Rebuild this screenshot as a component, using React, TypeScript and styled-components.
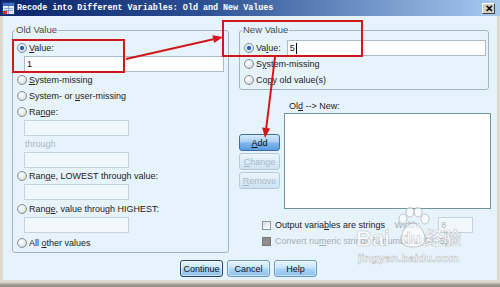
import React from "react";
import styled, { createGlobalStyle } from "styled-components";

const BG = "#e7f3fb";

const Global = createGlobalStyle`
  html, body { margin: 0; padding: 0; background: #fff; }
  body { font-family: "Liberation Sans", Arial, sans-serif; }
  * { box-sizing: border-box; }
`;

const Window = styled.div`
  position: relative;
  width: 500px;
  height: 287px;
  overflow: hidden;
  display: flex;
  flex-direction: column;
  background: #d8d4cc;
  font-family: "Liberation Sans", Arial, sans-serif;
  font-size: 9px;
  color: #222;
`;

const TitleBar = styled.div`
  height: 16px;
  flex: none;
  display: flex;
  align-items: center;
  padding: 0 5px 0 2px;
  background: linear-gradient(to right, #0a246a 0%, #2c4f92 40%, #a6caf0 100%);
`;

const TitleText = styled.span`
  flex: 1;
  margin-left: 2px;
  color: #fff;
  font-family: "Liberation Mono", "Courier New", monospace;
  font-weight: bold;
  font-size: 8.4px;
  white-space: nowrap;
`;

const CloseBtn = styled.div`
  width: 13px;
  height: 11px;
  margin-top: 1px;
  display: flex;
  align-items: center;
  justify-content: center;
  background: #d4d0c8;
  border: 1px solid;
  border-color: #ffffff #404040 #404040 #ffffff;
  color: #000;
  font: bold 10px "Liberation Sans", Arial, sans-serif;
  line-height: 1;
`;

const Main = styled.div`
  flex: 1;
  display: flex;
  flex-direction: column;
  background: ${BG};
  border-left: 3px solid #dcd8ce;
  border-right: 3px solid #dcd8ce;
  padding: 14px 7px 0 9px;
`;

const TopRow = styled.div`
  display: flex;
  align-items: flex-start;
  gap: 10px;
`;

const Group = styled.div<{ $w: number; $h: number }>`
  width: ${(p) => p.$w}px;
  height: ${(p) => p.$h}px;
  flex: none;
  border: 1px solid #a3b6c2;
  border-radius: 3px;
  padding: 0 3px 0 4px;
  display: flex;
  flex-direction: column;
`;

const Caption = styled.div`
  width: fit-content;
  height: 12px;
  line-height: 12px;
  margin: -7px 0 4px -2px;
  padding: 0 1px;
  background: ${BG};
  color: #4a4a4a;
  font-size: 9.5px;
`;

const Option = styled.div<{ $mt?: number; $muted?: boolean }>`
  height: 16px;
  flex: none;
  display: flex;
  align-items: center;
  gap: 2px;
  white-space: nowrap;
  margin-top: ${(p) => p.$mt ?? 0}px;
  color: ${(p) => (p.$muted ? "#a8b8c4" : "#222")};
`;

const Radio = styled.span<{ $on?: boolean }>`
  width: 10px;
  height: 10px;
  flex: none;
  border-radius: 50%;
  border: 1px solid #858f97;
  background: radial-gradient(circle at 40% 35%, #ffffff 0%, #e4e8eb 55%, #b9c0c6 100%);
  display: flex;
  align-items: center;
  justify-content: center;
  &::after {
    content: "";
    display: ${(p) => (p.$on ? "block" : "none")};
    width: 4px;
    height: 4px;
    border-radius: 50%;
    background: #1f5fb5;
    box-shadow: 0 0 1px #5d8fd8;
  }
`;

const Key = styled.span`
  text-decoration: underline;
`;

const Field = styled.div<{ $w: number; $ml?: number; $mr?: number; $disabled?: boolean }>`
  width: ${(p) => p.$w}px;
  height: 16px;
  flex: none;
  margin-left: ${(p) => p.$ml ?? 7}px;
  margin-right: ${(p) => p.$mr ?? 0}px;
  padding: 0 2px;
  display: flex;
  align-items: center;
  background: ${(p) => (p.$disabled ? "#f1f8fc" : "#ffffff")};
  border: 1px solid ${(p) => (p.$disabled ? "#c4d4de" : "#a9bcc8")};
  color: ${(p) => (p.$disabled ? "#a8b4bc" : "#111")};
  font-size: 9px;
`;

const Caret = styled.span`
  width: 1px;
  height: 11px;
  margin-left: 1px;
  background: #000;
`;

const SubLabel = styled.div`
  height: 16px;
  flex: none;
  display: flex;
  align-items: center;
  margin-left: 8px;
  color: #a8b8c4;
`;

const RightCol = styled.div`
  width: 252px;
  flex: none;
  display: flex;
  flex-direction: column;
`;

const ListArea = styled.div`
  display: flex;
  gap: 4px;
  margin-top: 10px;
`;

const SideButtons = styled.div`
  width: 41px;
  flex: none;
  padding-top: 34px;
  display: flex;
  flex-direction: column;
  gap: 2px;
`;

const SideButton = styled.div<{ $disabled?: boolean }>`
  height: 17px;
  display: flex;
  align-items: center;
  justify-content: center;
  border-radius: 3px;
  font-size: 9px;
  border: 1px solid ${(p) => (p.$disabled ? "#b3cade" : "#3d6fa3")};
  color: ${(p) => (p.$disabled ? "#a6b9c9" : "#0d0d0d")};
  background: ${(p) =>
    p.$disabled
      ? "linear-gradient(to bottom, #eef6fc 0%, #dcebf6 50%, #cfe2f1 100%)"
      : "linear-gradient(to bottom, #d6eafb 0%, #a9cff3 45%, #7fb5ea 55%, #5c9de0 100%)"};
`;

const ListCol = styled.div`
  flex: 1;
  display: flex;
  flex-direction: column;
`;

const ListLabel = styled.div`
  height: 12px;
  line-height: 12px;
  margin-left: 5px;
`;

const ListBox = styled.div`
  height: 96px;
  margin-top: 1px;
  background: #fff;
  border: 1px solid #6f959f;
`;

const Checks = styled.div`
  display: flex;
  flex-direction: column;
  margin-top: 8px;
  padding-left: 23px;
`;

const CheckRow = styled.div<{ $muted?: boolean }>`
  height: 16px;
  display: flex;
  align-items: center;
  gap: 4px;
  white-space: nowrap;
  color: ${(p) => (p.$muted ? "#a3aeb6" : "#222")};
`;

const CheckBox = styled.span<{ $filled?: boolean }>`
  width: 9px;
  height: 9px;
  flex: none;
  border: 1px solid ${(p) => (p.$filled ? "#7a7a7a" : "#8c979f")};
  background: ${(p) =>
    p.$filled ? "#8e8e8e" : "linear-gradient(135deg, #d9dee2, #ffffff)"};
`;

const WidthLabel = styled.span`
  margin-left: auto;
  color: #a3aeb6;
`;

const ButtonRow = styled.div`
  display: flex;
  justify-content: center;
  gap: 4px;
  margin-top: 7px;
  padding-right: 5px;
`;

const PushButton = styled.div<{ $default?: boolean }>`
  width: 43px;
  height: 17px;
  display: flex;
  align-items: center;
  justify-content: center;
  border-radius: 3px;
  font-size: 9px;
  color: #111;
  border: 1px solid ${(p) => (p.$default ? "#27466a" : "#6b99c4")};
  background: linear-gradient(to bottom, #e9f6fe 0%, #c7e4fa 45%, #a9d2f3 55%, #8fc3ec 100%);
  box-shadow: inset 0 0 0 1px rgba(255, 255, 255, 0.45);
`;

const BottomFrame = styled.div`
  height: 7px;
  flex: none;
  background: linear-gradient(to bottom, #e2dfd8 0, #d4d0c8 3px, #a8a49c 4px, #8e8a84 100%);
`;

const Annotations = styled.svg`
  position: absolute;
  left: 0;
  top: 0;
  pointer-events: none;
`;

const Watermark = styled.div`
  position: absolute;
  left: 355px;
  top: 207px;
  width: 120px;
  height: 62px;
  pointer-events: none;
`;

const WmText = styled.span<{ $x: number; $y: number; $size: number; $cjk?: boolean }>`
  position: absolute;
  left: ${(p) => p.$x}px;
  top: ${(p) => p.$y}px;
  font-family: ${(p) =>
    p.$cjk ? '"Noto Sans CJK SC", sans-serif' : '"Liberation Sans", Arial, sans-serif'};
  font-weight: bold;
  font-size: ${(p) => p.$size}px;
  line-height: 1;
  white-space: nowrap;
  color: rgba(255, 255, 255, 0.72);
  -webkit-text-stroke: 0.6px rgba(150, 150, 150, 0.55);
`;

const TitleIcon = () => (
  <svg width="13" height="13" viewBox="0 0 13 13">
    <rect x="0.5" y="0.5" width="12" height="12" fill="#dfe9f6" stroke="#1b3d7e" />
    <rect x="1" y="1" width="11" height="3" fill="#3f6fc2" />
    <path d="M2 6.5h9M2 8.5h9M6.5 4v8" stroke="#7d98c4" strokeWidth="0.8" />
    <rect x="1" y="9" width="4" height="3" fill="#d2302a" />
  </svg>
);

const Paw = () => (
  <svg
    width="36"
    height="44"
    viewBox="0 0 36 44"
    style={{ position: "absolute", left: 40, top: 0 }}
  >
    <g fill="rgba(255,255,255,0.6)" stroke="rgba(160,160,160,0.6)" strokeWidth="1">
      <ellipse cx="8" cy="12" rx="4" ry="5" />
      <ellipse cx="15" cy="5" rx="4" ry="5" />
      <ellipse cx="23" cy="5" rx="4" ry="5" />
      <ellipse cx="30" cy="12" rx="4" ry="5" />
      <path d="M18 16c-6 0-12 9-12 16 0 6 5 8 12 8s12-2 12-8c0-7-6-16-12-16z" />
    </g>
  </svg>
);

const App: React.FC = () => (
  <>
    <Global />
    <Window>
      <TitleBar>
        <TitleIcon />
        <TitleText>Recode into Different Variables: Old and New Values</TitleText>
        <CloseBtn>✕</CloseBtn>
      </TitleBar>
      <Main>
        <TopRow>
          <Group $w={217} $h={223}>
            <Caption>Old Value</Caption>
            <Option>
              <Radio $on />
              <span>
                <Key>V</Key>alue:
              </span>
            </Option>
            <Field $w={200}>1</Field>
            <Option>
              <Radio />
              <span>
                <Key>S</Key>ystem-missing
              </span>
            </Option>
            <Option>
              <Radio />
              <span>
                System- or <Key>u</Key>ser-missing
              </span>
            </Option>
            <Option>
              <Radio />
              <span>
                Ra<Key>n</Key>ge:
              </span>
            </Option>
            <Field $w={105} $disabled />
            <SubLabel>through</SubLabel>
            <Field $w={105} $disabled />
            <Option>
              <Radio />
              <span>
                Ran<Key>g</Key>e, LOWEST through value:
              </span>
            </Option>
            <Field $w={105} $disabled />
            <Option $mt={1}>
              <Radio />
              <span>
                Rang<Key>e</Key>, value through HIGHEST:
              </span>
            </Option>
            <Field $w={105} $disabled />
            <Option $mt={2}>
              <Radio />
              <span>
                All <Key>o</Key>ther values
              </span>
            </Option>
          </Group>
          <RightCol>
            <Group $w={250} $h={60}>
              <Caption>New Value</Caption>
              <Option>
                <Radio $on />
                <span>
                  Va<Key>l</Key>ue:
                </span>
                <Field $w={199} $ml={4}>
                  5<Caret />
                </Field>
              </Option>
              <Option>
                <Radio />
                <span>
                  S<Key>y</Key>stem-missing
                </span>
              </Option>
              <Option>
                <Radio />
                <span>
                  Co<Key>p</Key>y old value(s)
                </span>
              </Option>
            </Group>
            <ListArea>
              <SideButtons>
                <SideButton>
                  <span>
                    <Key>A</Key>dd
                  </span>
                </SideButton>
                <SideButton $disabled>
                  <span>
                    <Key>C</Key>hange
                  </span>
                </SideButton>
                <SideButton $disabled>
                  <span>
                    <Key>R</Key>emove
                  </span>
                </SideButton>
              </SideButtons>
              <ListCol>
                <ListLabel>
                  Ol<Key>d</Key> --&gt; New:
                </ListLabel>
                <ListBox />
              </ListCol>
            </ListArea>
            <Checks>
              <CheckRow>
                <CheckBox />
                <span>
                  Output varia<Key>b</Key>les are strings
                </span>
                <WidthLabel>Width:</WidthLabel>
                <Field $w={35} $ml={14} $mr={18} $disabled>
                  8
                </Field>
              </CheckRow>
              <CheckRow $muted>
                <CheckBox $filled />
                <span>
                  Convert nu<Key>m</Key>eric strings to numbers ('5'-&gt;5)
                </span>
              </CheckRow>
            </Checks>
          </RightCol>
        </TopRow>
        <ButtonRow>
          <PushButton $default>Continue</PushButton>
          <PushButton>Cancel</PushButton>
          <PushButton>Help</PushButton>
        </ButtonRow>
      </Main>
      <BottomFrame />

      <Watermark>
        <Paw />
        <WmText $x={1} $y={21} $size={22}>
          Bai
        </WmText>
        <WmText $x={46} $y={24} $size={16}>
          du
        </WmText>
        <WmText $x={70} $y={21} $size={18} $cjk>
          经验
        </WmText>
        <WmText $x={3} $y={46} $size={11.5}>
          jingyan.baidu.com
        </WmText>
      </Watermark>

      <Annotations width="500" height="287" viewBox="0 0 500 287">
        <g stroke="#d2161b" strokeWidth="2" fill="none">
          <rect x="13" y="40" width="111" height="32" />
          <rect x="223" y="21" width="139" height="35" />
          <line x1="126" y1="59" x2="213.5" y2="39.2" />
          <line x1="275" y1="57" x2="266.2" y2="128.5" />
        </g>
        <g fill="#d2161b">
          <polygon points="223,37 214.1,43.1 212.4,35.3" />
          <polygon points="265,138 270.2,128.6 262.2,127.6" />
        </g>
      </Annotations>
    </Window>
  </>
);

export default App;
